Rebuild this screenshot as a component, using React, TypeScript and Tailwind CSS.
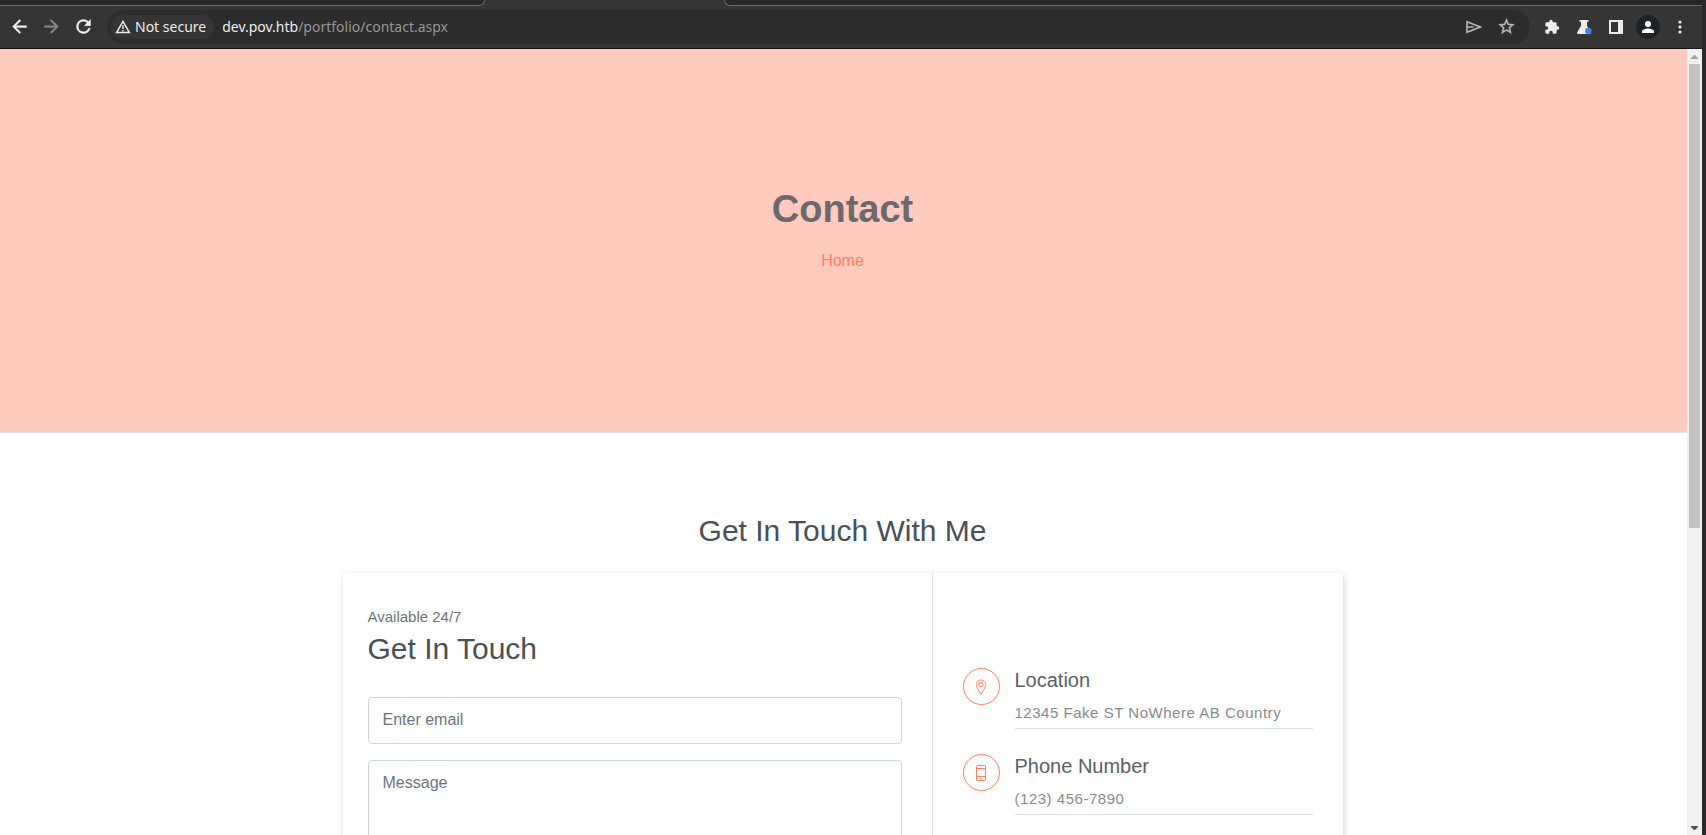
import React from "react";

const toolIcon = "grid size-6 shrink-0 place-items-center";

function Toolbar() {
  return (
    <header className="shrink-0 border-b border-[#161616] bg-[#353535] font-['Noto_Sans',sans-serif]">
      <div className="flex h-1.5 bg-[#353535]" aria-hidden="true">
        <div className="w-[485px] rounded-br-md border-r border-b border-[#6a6a6a] bg-[#262626]" />
        <div className="w-[239px] bg-[#353535]" />
        <div className="flex-1 rounded-bl-md border-b border-l border-[#6a6a6a] bg-[#262626]" />
      </div>
      <nav className="flex h-[42px] items-center pr-2.5 pb-px pl-[7px]" aria-label="Browser">
        <div className="flex gap-2">
          <button className={toolIcon} aria-label="Back">
            <svg viewBox="0 0 24 24" className="size-[21px]" fill="#f1f1f1">
              <path d="M20 11H7.83l5.59-5.59L12 4l-8 8 8 8 1.41-1.41L7.83 13H20z" stroke="#f1f1f1" strokeWidth=".5" />
            </svg>
          </button>
          <button className={toolIcon} aria-label="Forward">
            <svg viewBox="0 0 24 24" className="size-[21px]" fill="#858585">
              <path d="M12 4l-1.41 1.41L16.17 11H4v2h12.17l-5.58 5.59L12 20l8-8z" stroke="#858585" strokeWidth=".5" />
            </svg>
          </button>
          <button className={toolIcon} aria-label="Reload">
            <svg viewBox="0 0 24 24" className="size-[21px]" fill="#f1f1f1">
              <path d="M17.65 6.35A7.96 7.96 0 0 0 12 4a8 8 0 1 0 7.73 10h-2.08A6 6 0 1 1 12 6c1.66 0 3.14.69 4.22 1.78L13 11h7V4z" stroke="#f1f1f1" strokeWidth=".5" />
            </svg>
          </button>
        </div>
        <div className="ml-3 flex h-[34px] flex-1 items-center rounded-full bg-[#2c2c2c] pr-3 pl-1">
          <button className="flex h-6 items-center gap-1 rounded-full bg-[#353535] pr-2 pl-1 text-[14px] leading-6 text-[#ececec]">
            <svg viewBox="0 0 24 24" className="size-4" fill="none" stroke="#ececec" strokeWidth="2.2">
              <path d="M12 3.6 2.4 20.4h19.2z" />
              <path d="M12 9.5v5.5M12 16.6v2" />
            </svg>
            Not secure
          </button>
          <div className="ml-2 flex-1 text-[14px] leading-6 text-[#979797]">
            <span className="text-[#ececec]">dev.pov.htb</span>/portfolio/contact.aspx
          </div>
          <button className={toolIcon} aria-label="Share">
            <svg viewBox="0 0 16 16" className="size-4" fill="none" stroke="#b8b8b8" strokeWidth="1.6">
              <path d="M1 2.7v10.6L14.3 8zM1.5 8h6" />
            </svg>
          </button>
          <button className={`${toolIcon} ml-2`} aria-label="Bookmark">
            <svg viewBox="0 0 24 24" className="size-[19px]" fill="#bcbcbc" stroke="#bcbcbc" strokeWidth=".4">
              <path d="m22 9.24-7.19-.62L12 2 9.19 8.63 2 9.24l5.46 4.73L5.82 21 12 17.27 18.18 21l-1.63-7.03zM12 15.4l-3.76 2.27 1-4.28-3.32-2.88 4.38-.38L12 6.1l1.71 4.04 4.38.38-3.32 2.88 1 4.28z" />
            </svg>
          </button>
        </div>
        <div className="ml-2.5 flex items-center gap-2">
          <button className={toolIcon} aria-label="Extensions">
            <svg viewBox="0 0 24 24" className="size-4" fill="#ededed">
              <path d="M20.5 11H19V7a2 2 0 0 0-2-2h-4V3.5a2.5 2.5 0 0 0-5 0V5H4a2 2 0 0 0-2 2v3.8h1.5a2.7 2.7 0 0 1 0 5.4H2V20a2 2 0 0 0 2 2h3.8v-1.5a2.7 2.7 0 0 1 5.4 0V22H17a2 2 0 0 0 2-2v-4h1.5a2.5 2.5 0 0 0 0-5z" />
            </svg>
          </button>
          <button className={toolIcon} aria-label="Experiments">
            <svg viewBox="0 0 16 16" className="size-4" fill="#ededed">
              <path d="M3.5 1h9v1.8H11v4l3.8 6.4A1.2 1.2 0 0 1 13.8 15H2.2a1.2 1.2 0 0 1-1-1.8L5 6.8V2.8H3.5z" />
              <circle cx="12.3" cy="12" r="3.2" fill="#4285f4" />
            </svg>
          </button>
          <button className={toolIcon} aria-label="Side panel">
            <svg viewBox="0 0 14 14" className="size-3.5" fill="#ededed">
              <path fillRule="evenodd" d="M0 0h14v14H0zM2 2v10h7V2z" />
            </svg>
          </button>
          <button className={`${toolIcon} rounded-full bg-[#202124]`} aria-label="Profile">
            <svg viewBox="0 0 12 12" className="size-3" fill="#fff">
              <circle cx="6" cy="3" r="3" />
              <path d="M0 12V10.5C0 8.500 4 7.500 6 7.500s6 1 6 3V12z" />
            </svg>
          </button>
          <button className={toolIcon} aria-label="Menu">
            <svg viewBox="0 0 4 14" className="h-3.5 w-1" fill="#ededed">
              <circle cx="2" cy="2" r="1.6" />
              <circle cx="2" cy="7" r="1.6" />
              <circle cx="2" cy="12" r="1.6" />
            </svg>
          </button>
        </div>
      </nav>
    </header>
  );
}

function Scrollbar() {
  return (
    <div className="flex w-[15px] shrink-0 flex-col items-center bg-[#f0f0f0]" aria-hidden="true">
      <svg viewBox="0 0 15 15" className="size-[15px] shrink-0" fill="#a3a3a3">
        <path d="M4 10h7V9L8 6H7L4 9z" />
      </svg>
      <div className="h-[59%] w-[11px] bg-[#c1c1c1]" />
      <svg viewBox="0 0 15 15" className="mt-auto size-[15px] shrink-0" fill="#505050">
        <path d="M4 6h7v1L8 10H7L4 7z" />
      </svg>
    </div>
  );
}

function ContactItem({ title, value, children }: { title: string; value: string; children: React.ReactNode }) {
  return (
    <div className="flex gap-[15px]">
      <div className="grid size-[37px] shrink-0 place-items-center rounded-full border border-[#ff7f5f]">
        <svg viewBox="0 0 16 16" className="size-4" fill="none" stroke="#ff7f5f">
          {children}
        </svg>
      </div>
      <div className="flex-1 border-b border-[#dee2e6] pb-[3px]">
        <h3 className="text-[20px] leading-6 text-[#5a6168]">{title}</h3>
        <p className="mt-[9px] text-[15px] leading-6 tracking-[0.035em] text-[#868a8e]">{value}</p>
      </div>
    </div>
  );
}

const field = "block w-full rounded border border-[#ced4da] bg-white px-3.5 text-[16px] text-[#495057] outline-none placeholder:text-[#6c757d]";

export default function App() {
  return (
    <div className="flex h-screen flex-col overflow-hidden bg-white font-['Liberation_Sans',Arial,sans-serif]">
      <div className="flex min-h-0 flex-1 border-r-4 border-[#2b2a28]">
        <div className="flex min-w-0 flex-1 flex-col">
          <Toolbar />
          <div className="flex min-h-0 flex-1">
            <main className="min-w-0 flex-1 overflow-hidden">
              <section className="flex h-96 flex-col items-center border-b border-[#dee2e6] bg-[#ffcbbd] pt-[136px] pr-0.5">
                <h1 className="text-[38px] leading-[48px] font-bold text-[#6c696d]">Contact</h1>
                <a href="#home" className="mt-4 text-[16px] leading-6 text-[#ff7f5f]">Home</a>
              </section>
              <section className="pt-20 pr-[26px] pl-6">
                <h2 className="text-center text-[30px] leading-9 text-[#495057]">Get In Touch With Me</h2>
                <div className="mx-auto mt-6 flex max-w-[1000px] rounded bg-white shadow-[1px_2px_6px_rgba(0,0,0,0.16)]">
                  <form className="flex-1 pt-8 pr-[30px] pb-8 pl-[25px]">
                    <p className="text-[15px] leading-6 text-[#6c757d]">Available 24/7</p>
                    <h2 className="mt-0.5 text-[30px] leading-9 text-[#495057]">Get In Touch</h2>
                    <input type="email" aria-label="Enter email" placeholder="Enter email" className={`${field} mt-[30px] h-[47px] pb-0.5`} />
                    <textarea aria-label="Message" placeholder="Message" rows={6} className={`${field} mt-4 resize-none py-2.5 leading-6`} />
                  </form>
                  <div className="flex w-[411px] flex-col gap-[25px] border-l border-[#dee2e6] px-[30px] pt-[95px]">
                    <ContactItem title="Location" value="12345 Fake ST NoWhere AB Country">
                      <path d="M8 15.4C6.500 12.500 3.500 9.300 3.500 5.500a4.500 4.500 0 0 1 9 0C12.500 9.300 9.500 12.500 8 15.400z" />
                      <circle cx="8" cy="5.6" r="2.2" />
                    </ContactItem>
                    <ContactItem title="Phone Number" value="(123) 456-7890">
                      <rect x="3.5" y=".5" width="9" height="15" rx=".8" />
                      <path d="M3.500 3.500h9M3.500 11.500h9" />
                      <path d="M7 13.500h2" strokeOpacity=".6" />
                    </ContactItem>
                  </div>
                </div>
              </section>
            </main>
            <Scrollbar />
          </div>
        </div>
      </div>
    </div>
  );
}
